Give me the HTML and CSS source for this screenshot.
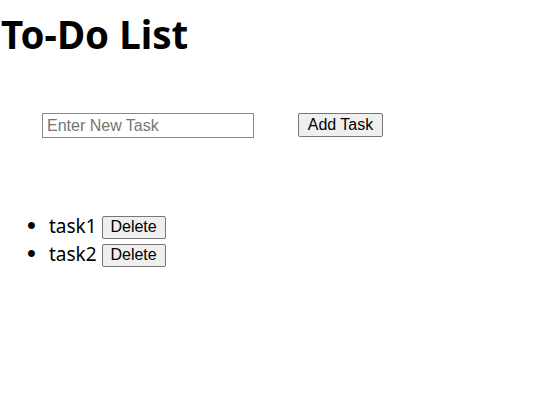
FILE: index.html
```html
<!DOCTYPE html>
<html>
<head>
<meta charset="utf-8">
<link rel="stylesheet" href="styles.css">
</head>
<body>
<h1 class="title">To-Do List</h1>
<div class="add-row">
  <input class="task-input" type="text" placeholder="Enter New Task">
  <button class="btn add-btn">Add Task</button>
</div>
<ul class="task-list">
  <li class="task">task1 <button class="btn del-btn">Delete</button></li>
  <li class="task">task2 <button class="btn del-btn">Delete</button></li>
</ul>
</body>
</html>
```

FILE: styles.css
```css
html, body {
  margin: 0;
  padding: 0;
  background: #ffffff;
}
body {
  font-family: "Noto Sans", "Open Sans", sans-serif;
  color: #000;
}
.title {
  margin: 0;
  padding-top: 10px;
  padding-left: 1px;
  font-size: 38.5px;
  font-weight: 700;
  line-height: 48px;
}
.add-row {
  display: flex;
  align-items: flex-start;
  gap: 44px;
  margin-top: 55px;
  padding-left: 42px;
}
.task-input {
  box-sizing: border-box;
  width: 212px;
  height: 25px;
  margin: 0;
  padding: 1px 4px;
  border: 1px solid #8a8a8a;
  font-family: "Liberation Sans", Arial, sans-serif;
  font-size: 16px;
  color: #000;
  outline: none;
}
.task-input::placeholder {
  color: #757575;
}
.btn {
  box-sizing: border-box;
  margin: 0;
  background: #efefef;
  border: 1px solid #767676;
  border-radius: 2px;
  font-family: "Liberation Sans", Arial, sans-serif;
  color: #000;
}
.add-btn {
  width: 85px;
  height: 24px;
  padding: 0 6px;
  font-size: 16px;
}
.task-list {
  margin: 74px 0 0 0;
  padding-left: 49px;
}
.task {
  font-size: 19px;
  line-height: 28px;
}
.task::marker {
  content: "\2022\00a0\00a0";
  font: 700 24px/1 "Liberation Sans", sans-serif;
}
.del-btn {
  width: 64px;
  height: 23px;
  padding: 0 4px;
  font-size: 16px;
  vertical-align: 1px;
}
```
